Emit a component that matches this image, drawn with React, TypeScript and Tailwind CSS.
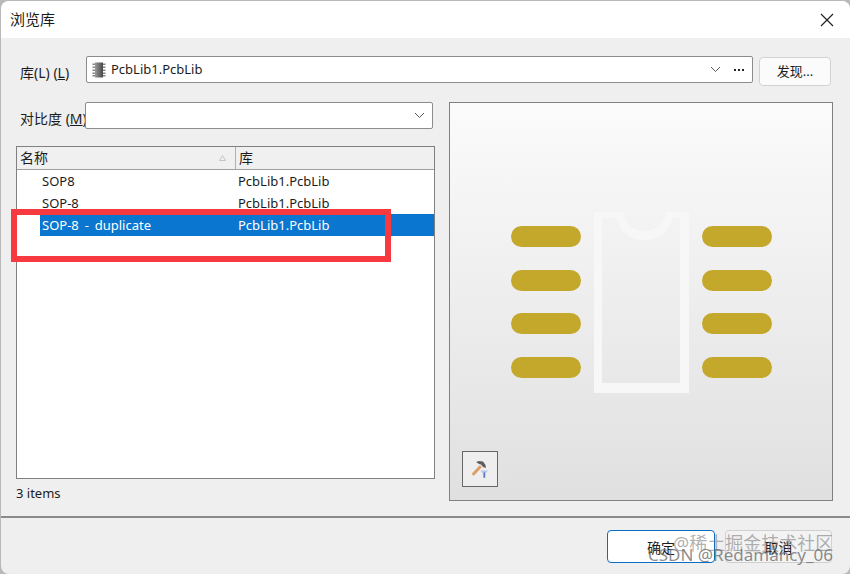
import React from "react";

const font = { fontFamily: '"Noto Sans", "Noto Sans CJK SC", "Liberation Sans", sans-serif' };

function ChipIcon() {
  return (
    <svg width="14" height="16" viewBox="0 0 14 16" className="shrink-0">
      <defs>
        <linearGradient id="chip" x1="0" x2="1" y1="0" y2="0">
          <stop offset="0" stopColor="#9a9a9a" />
          <stop offset="1" stopColor="#474747" />
        </linearGradient>
      </defs>
      <rect x="3" y="0.5" width="8" height="15" fill="url(#chip)" />
      {[1.5, 4.5, 7.5, 10.5, 13].map((y) => (
        <g key={y}>
          <rect x="0.5" y={y} width="2.5" height="1.5" fill="#888" />
          <rect x="11" y={y} width="2.5" height="1.5" fill="#888" />
        </g>
      ))}
    </svg>
  );
}

function HammerIcon() {
  return (
    <svg width="20" height="22" viewBox="0 0 20 22">
      <path d="M3.5 16 L10 9" stroke="#dc9f66" strokeWidth="3" strokeLinecap="round" />
      <path d="M6 4 L9 3 L13 3.5 L15.5 7 L16 10 L13 9 L11 6.5 L9 6 Z" fill="#5c5e62" />
      <path d="M10.5 12.5 H18 L15.6 15.5 V20 H13 V15.5 Z" fill="#b6c5ec" />
      <rect x="13.6" y="14.5" width="1.4" height="5" fill="#5a76c4" />
    </svg>
  );
}

function Preview() {
  const ys = [123, 167, 210, 254];
  return (
    <svg width="382" height="397" viewBox="0 0 382 397" className="block">
      <path
        fillRule="evenodd"
        d="M144 109 H173 C175 122 184 128 194 128 C205 128 214 122 216 109 H239 V290 H144 Z M152 115 H167 C170 130 182 137 194 137 C207 137 219 130 222 115 H230 V280 H152 Z"
        fill="#f7f7f7"
      />
      {ys.map((y) => (
        <g key={y} fill="#c3a82b">
          <rect x="61" y={y} width="70" height="21" rx="10.5" />
          <rect x="252" y={y} width="70" height="21" rx="10.5" />
        </g>
      ))}
    </svg>
  );
}

const rows = [
  { name: "SOP8", lib: "PcbLib1.PcbLib", selected: false },
  { name: "SOP-8", lib: "PcbLib1.PcbLib", selected: false },
  { name: "SOP-8 - duplicate", lib: "PcbLib1.PcbLib", selected: true },
];

export default function App() {
  return (
    <div
      className="relative w-[850px] h-[574px] overflow-hidden bg-[#b9b9b9] text-[13px] text-[#1c1c1c]"
      style={font}
    >
      <div className="flex flex-col h-[573px] w-[849px] mt-px ml-px rounded-lg overflow-hidden bg-[#efefef]">
        {/* Title bar */}
        <div className="flex items-center justify-between h-[37px] shrink-0 bg-white pl-[9px] pr-[16px]">
          <span className="text-[15px] leading-none">浏览库</span>
          <svg width="14" height="14" viewBox="0 0 14 14">
            <path d="M1 1 L13 13 M13 1 L1 13" stroke="#222" strokeWidth="1.2" fill="none" />
          </svg>
        </div>

        {/* Body */}
        <div className="flex flex-col h-[480px] shrink-0 border-b-2 border-[#8a8a8a]">
          {/* Library row */}
          <div className="flex items-start mt-[18px] pl-[19px]">
            <label className="w-[66px] mt-[8px] text-[14px] leading-[18px] whitespace-nowrap">
              库(L) (<span className="underline">L</span>)
            </label>
            <div className="flex items-center w-[667px] h-[27px] bg-white border border-[#8c8c8c] rounded-[2px] pl-[5px] pr-[8px]">
              <ChipIcon />
              <span className="ml-[5px] flex-1">PcbLib1.PcbLib</span>
              <svg width="11" height="7" viewBox="0 0 11 7" className="mr-[13px]">
                <path d="M1 1 L5.5 5.5 L10 1" stroke="#555" strokeWidth="1" fill="none" />
              </svg>
              <span className="flex gap-[2px]">
                <i className="w-[2px] h-[2px] bg-[#222]" />
                <i className="w-[2px] h-[2px] bg-[#222]" />
                <i className="w-[2px] h-[2px] bg-[#222]" />
              </span>
            </div>
            <button className="ml-[6px] mt-px w-[72px] h-[29px] bg-[#fbfbfb] border border-[#d2d2d2] rounded-[4px] text-[13px]">
              发现...
            </button>
          </div>

          {/* Two columns */}
          <div className="flex mt-[16px] pl-[15px] gap-[14px]">
            <div className="flex flex-col w-[419px]">
              <div className="flex items-start h-[27px]">
                <label className="w-[69px] pl-[4px] mt-[8px] text-[14px] leading-[18px] whitespace-nowrap overflow-hidden">
                  对比度 (<span className="underline">M</span>)
                </label>
                <div className="flex items-center justify-end w-[348px] h-[27px] bg-white border border-[#8c8c8c] rounded-[2px] pr-[7px]">
                  <svg width="11" height="7" viewBox="0 0 11 7">
                    <path d="M1 1 L5.5 5.5 L10 1" stroke="#555" strokeWidth="1" fill="none" />
                  </svg>
                </div>
              </div>

              {/* List */}
              <div className="flex flex-col mt-[17px] h-[333px] bg-white border border-[#808080]">
                <div className="flex h-[23px] shrink-0 bg-[#f0f0f0] border-b border-[#a0a0a0] text-[14px] leading-[22px]">
                  <div className="relative w-[219px] pl-[3px] border-r border-[#b0b0b0]">
                    名称
                    <svg width="7" height="6" viewBox="0 0 7 6" className="absolute right-[9px] top-[8px]">
                      <path d="M3.5 0.5 L6.5 5.5 H0.5 Z" fill="none" stroke="#c4c4c4" strokeWidth="1" />
                    </svg>
                  </div>
                  <div className="pl-[3px]">库</div>
                </div>
                {rows.map((r) => (
                  <div key={r.name} className="flex h-[22px] leading-[22px]">
                    <div className="w-[23px] shrink-0" />
                    <div className={`flex flex-1 ${r.selected ? "bg-[#0a76d0] text-white" : ""}`}>
                      <div className="w-[198px] pl-[2px] whitespace-nowrap [word-spacing:2.5px]">{r.name}</div>
                      <div>{r.lib}</div>
                    </div>
                  </div>
                ))}
              </div>
              <div className="mt-[5px] leading-[18px]">3 items</div>
            </div>

            {/* Preview */}
            <div className="relative w-[384px] h-[399px] border border-[#808080] bg-gradient-to-b from-[#fbfbfb] to-[#e0e0e0]">
              <Preview />
              <button className="absolute left-[12px] top-[348px] flex items-center justify-center w-[36px] h-[36px] border border-[#666] bg-[#eeeeee]">
                <HammerIcon />
              </button>
            </div>
          </div>
        </div>

        {/* Footer */}
        <div className="flex justify-end gap-[10px] pt-[12px] pr-[18px]">
          <button className="w-[108px] h-[33px] bg-white border border-[#0a6cc4] rounded-[4px] pt-[2px] text-[14px]">
            确定
          </button>
          <button className="w-[107px] h-[33px] bg-[#f3f3f3] border border-[#d0d0d0] rounded-[4px] pt-[2px] text-[#1c1c1c] text-[14px]">
            取消
          </button>
        </div>
      </div>

      {/* Red annotation */}
      <div className="absolute left-[11px] top-[209px] w-[380px] h-[53px] border-[6px] border-[#f73a3f]" />

      {/* Watermarks */}
      <div className="absolute left-[673px] top-[532px] text-[18px] leading-[22px] text-[#7d7d7d]/60 whitespace-nowrap">
        @稀土掘金技术社区
      </div>
      <div className="absolute left-[648px] top-[545px] text-[17px] leading-[20px] text-[#6f6f6f]/80 whitespace-nowrap">
        CSDN @Redamancy_06
      </div>
    </div>
  );
}
